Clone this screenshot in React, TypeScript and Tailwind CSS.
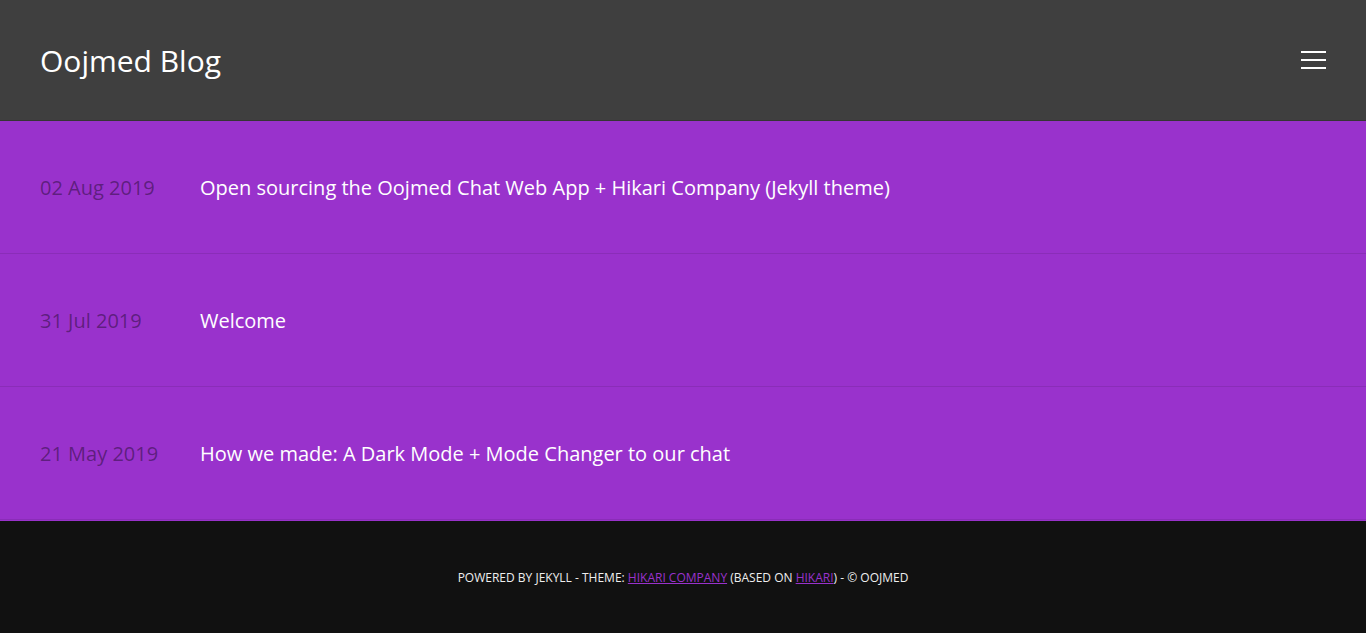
const posts = [
  { date: "02 Aug 2019", title: "Open sourcing the Oojmed Chat Web App + Hikari Company (Jekyll theme)" },
  { date: "31 Jul 2019", title: "Welcome" },
  { date: "21 May 2019", title: "How we made: A Dark Mode + Mode Changer to our chat" },
];

export default function App() {
  return (
    <div className="min-h-[633px] flex flex-col font-['Open_Sans',sans-serif]">
      <header className="h-[121px] bg-[#3f3f3f] flex items-center justify-between px-10 pt-[2px] border-b border-[#353535]">
        <a href="#" className="text-[30px] text-white leading-none">Oojmed Blog</a>
        <button className="flex flex-col gap-[6px] w-[25px] -mt-[2px]">
          <span className="block h-[2px] bg-white" />
          <span className="block h-[2px] bg-white" />
          <span className="block h-[2px] bg-white" />
        </button>
      </header>

      <main className="bg-[#9932cc] pb-[1px]">
        {posts.map((post, i) => (
          <a
            key={i}
            href="#"
            className="h-[133px] flex items-center px-10 pt-[2px] border-b border-[#8a2db8]"
          >
            <span className="w-[160px] text-[20px] text-black/40">{post.date}</span>
            <span className="text-[20px] text-white">{post.title}</span>
          </a>
        ))}
      </main>

      <footer className="flex-1 bg-[#111111] flex items-center justify-center min-h-[112px] pt-[2px]">
        <p className="text-[12px] text-[#eeeeee] uppercase">
          Powered by Jekyll - Theme:{" "}
          <a href="#" className="text-[#9932cc] underline">Hikari Company</a> (based on{" "}
          <a href="#" className="text-[#9932cc] underline">Hikari</a>) - © Oojmed
        </p>
      </footer>
    </div>
  );
}
